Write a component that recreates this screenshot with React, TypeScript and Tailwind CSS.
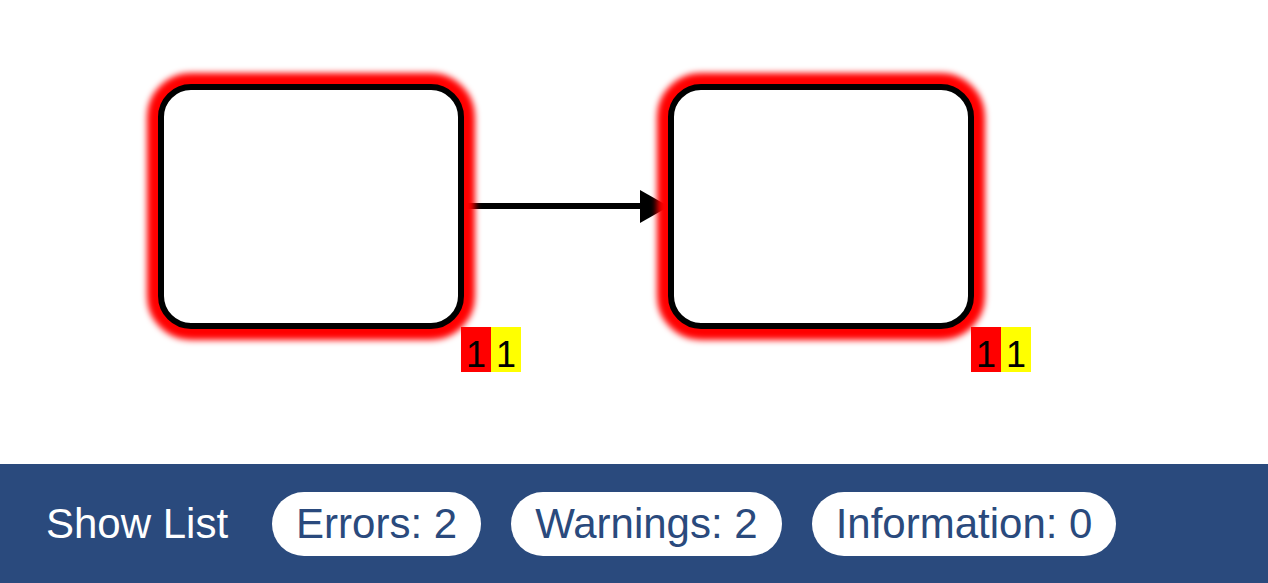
import React from "react";

const FONT = { fontFamily: '"Liberation Sans", Arial, sans-serif' };

interface Task {
  x: number;
  y: number;
  errors: number;
  warnings: number;
}

const tasks: Task[] = [
  { x: 161, y: 87, errors: 1, warnings: 1 },
  { x: 671, y: 87, errors: 1, warnings: 1 },
];

const W = 300;
const H = 239;

function Badge({ x, y, errors, warnings }: { x: number; y: number; errors: number; warnings: number }) {
  return (
    <div className="absolute flex text-[36px] text-black" style={{ left: x, top: y, ...FONT }}>
      <div className="h-[45px] w-[30px] bg-[#ff0000] text-center leading-[55px]">{errors}</div>
      <div className="h-[45px] w-[30px] bg-[#ffff00] text-center leading-[55px]">{warnings}</div>
    </div>
  );
}

function Pill({ label }: { label: string }) {
  return (
    <button className="flex h-[64px] items-center rounded-full bg-white px-[24px] text-[42px] text-[#2a4a7d]">
      {label}
    </button>
  );
}

export default function App() {
  return (
    <div className="flex h-[583px] w-full flex-col bg-white" style={FONT}>
      <div className="relative h-[464px] w-full">
        <svg width="1268" height="464" className="block">
          <defs>
            <filter id="glow" x="-20%" y="-20%" width="140%" height="140%">
              <feGaussianBlur stdDeviation="3" />
            </filter>
          </defs>
          {/* sequence flow */}
          <line x1="464" y1="206" x2="645" y2="206" stroke="#000" strokeWidth="6" />
          <polygon points="640,190 669,206.5 640,223" fill="#000" />
          {tasks.map((t, i) => (
            <g key={i}>
              <rect
                x={t.x}
                y={t.y}
                width={W}
                height={H}
                rx="30"
                fill="none"
                stroke="#ff0000"
                strokeWidth="28"
                filter="url(#glow)"
              />
              <rect x={t.x} y={t.y} width={W} height={H} rx="30" fill="#fff" stroke="#000" strokeWidth="6" />
            </g>
          ))}
        </svg>
        {tasks.map((t, i) => (
          <Badge key={i} x={t.x + W} y={327} errors={t.errors} warnings={t.warnings} />
        ))}
      </div>
      <div className="flex h-[119px] items-center bg-[#2a4a7d] pl-[46px]">
        <span className="mr-[44px] text-[42px] text-white">Show List</span>
        <div className="flex gap-[30px]">
          <Pill label="Errors: 2" />
          <Pill label="Warnings: 2" />
          <Pill label="Information: 0" />
        </div>
      </div>
    </div>
  );
}
